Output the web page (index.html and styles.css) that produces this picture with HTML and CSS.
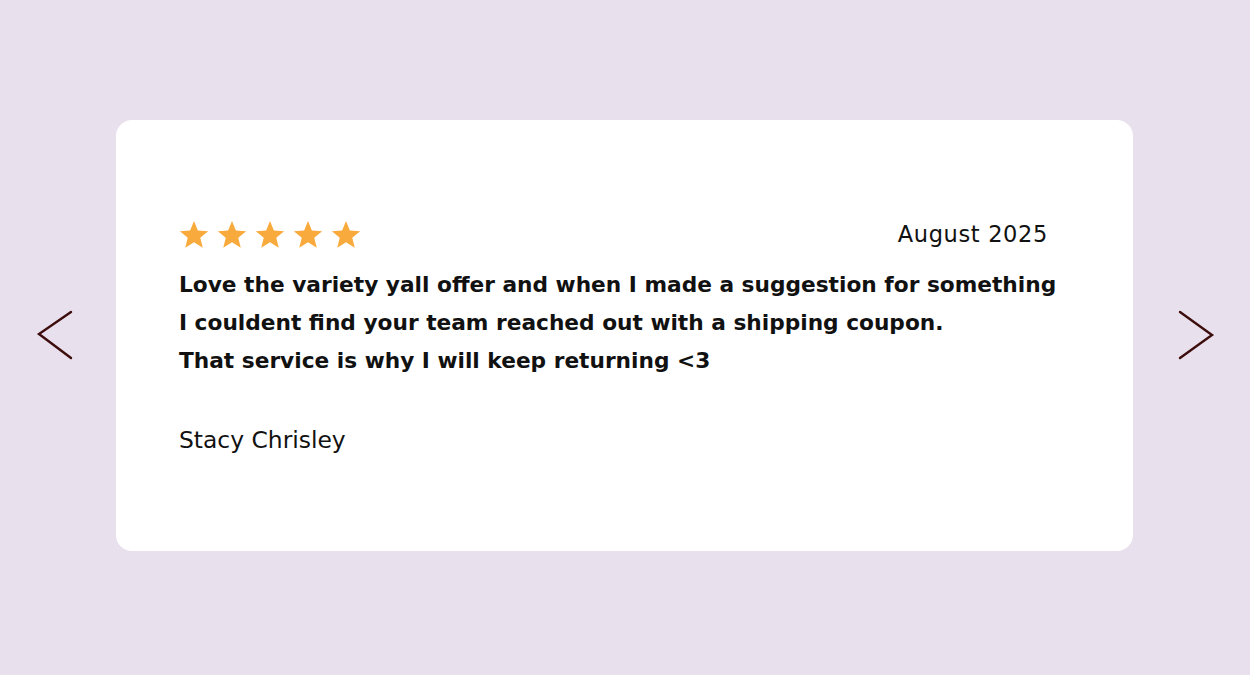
FILE: index.html
```html
<!DOCTYPE html>
<html>
<head>
<meta charset="utf-8">
<link rel="stylesheet" href="styles.css">
</head>
<body>
<div class="stage">
  <button class="nav nav-prev" aria-label="Previous">
    <svg width="40" height="52" viewBox="0 0 40 52"><polyline points="35,2 3,24 35,48" fill="none" stroke="#3d0d0d" stroke-width="2.4" stroke-linecap="round" stroke-linejoin="miter"/></svg>
  </button>
  <div class="card">
    <div class="head">
      <div class="stars">
        <svg class="star" viewBox="0 0 24 24"><path d="M12 1.5l3.1 7.6 8.2.6-6.3 5.3 2 8-7-4.4-7 4.4 2-8L.7 9.7l8.2-.6z"/></svg>
        <svg class="star" viewBox="0 0 24 24"><path d="M12 1.5l3.1 7.6 8.2.6-6.3 5.3 2 8-7-4.4-7 4.4 2-8L.7 9.7l8.2-.6z"/></svg>
        <svg class="star" viewBox="0 0 24 24"><path d="M12 1.5l3.1 7.6 8.2.6-6.3 5.3 2 8-7-4.4-7 4.4 2-8L.7 9.7l8.2-.6z"/></svg>
        <svg class="star" viewBox="0 0 24 24"><path d="M12 1.5l3.1 7.6 8.2.6-6.3 5.3 2 8-7-4.4-7 4.4 2-8L.7 9.7l8.2-.6z"/></svg>
        <svg class="star" viewBox="0 0 24 24"><path d="M12 1.5l3.1 7.6 8.2.6-6.3 5.3 2 8-7-4.4-7 4.4 2-8L.7 9.7l8.2-.6z"/></svg>
      </div>
      <div class="date">August 2025</div>
    </div>
    <p class="quote">Love the variety yall offer and when I made a suggestion for something<br>I couldent find your team reached out with a shipping coupon.<br>That service is why I will keep returning &lt;3</p>
    <div class="name">Stacy Chrisley</div>
  </div>
  <button class="nav nav-next" aria-label="Next">
    <svg width="40" height="52" viewBox="0 0 40 52"><polyline points="5,2 37,25 5,48" fill="none" stroke="#3d0d0d" stroke-width="2.4" stroke-linecap="round" stroke-linejoin="miter"/></svg>
  </button>
</div>
</body>
</html>
```
FILE: styles.css
```css
html, body {
  margin: 0;
  padding: 0;
}
body {
  background: #e8e0ec;
  width: 1250px;
  height: 675px;
  font-family: "DejaVu Sans", "Open Sans", sans-serif;
  color: #111;
}
.stage {
  display: flex;
  align-items: flex-start;
  padding-top: 120px;
  height: 555px;
}
.nav {
  background: none;
  border: 0;
  padding: 0;
  margin: 0;
  width: 40px;
  height: 52px;
  display: block;
  cursor: pointer;
}
.nav-prev {
  margin-left: 36px;
  margin-top: 190px;
}
.nav-next {
  margin-left: 42px;
  margin-top: 190px;
}
.card {
  margin-left: 40px;
  width: 1017px;
  height: 431px;
  box-sizing: border-box;
  background: #fff;
  border-radius: 16px;
  padding: 98px 85px 0 63px;
}
.head {
  display: flex;
  justify-content: space-between;
  align-items: center;
  height: 32px;
}
.stars {
  display: flex;
  gap: 8px;
}
.star {
  width: 30px;
  height: 30px;
  fill: #f9aa3c;
}
.date {
  font-size: 22.5px;
  font-weight: 400;
  color: #111;
  letter-spacing: 0.65px;
}
.quote {
  margin: 16px 0 0;
  font-size: 21.7px;
  font-weight: 700;
  line-height: 38px;
  color: #111;
  white-space: nowrap;
}
.name {
  margin-top: 46px;
  font-size: 23.4px;
  font-weight: 400;
}
```
